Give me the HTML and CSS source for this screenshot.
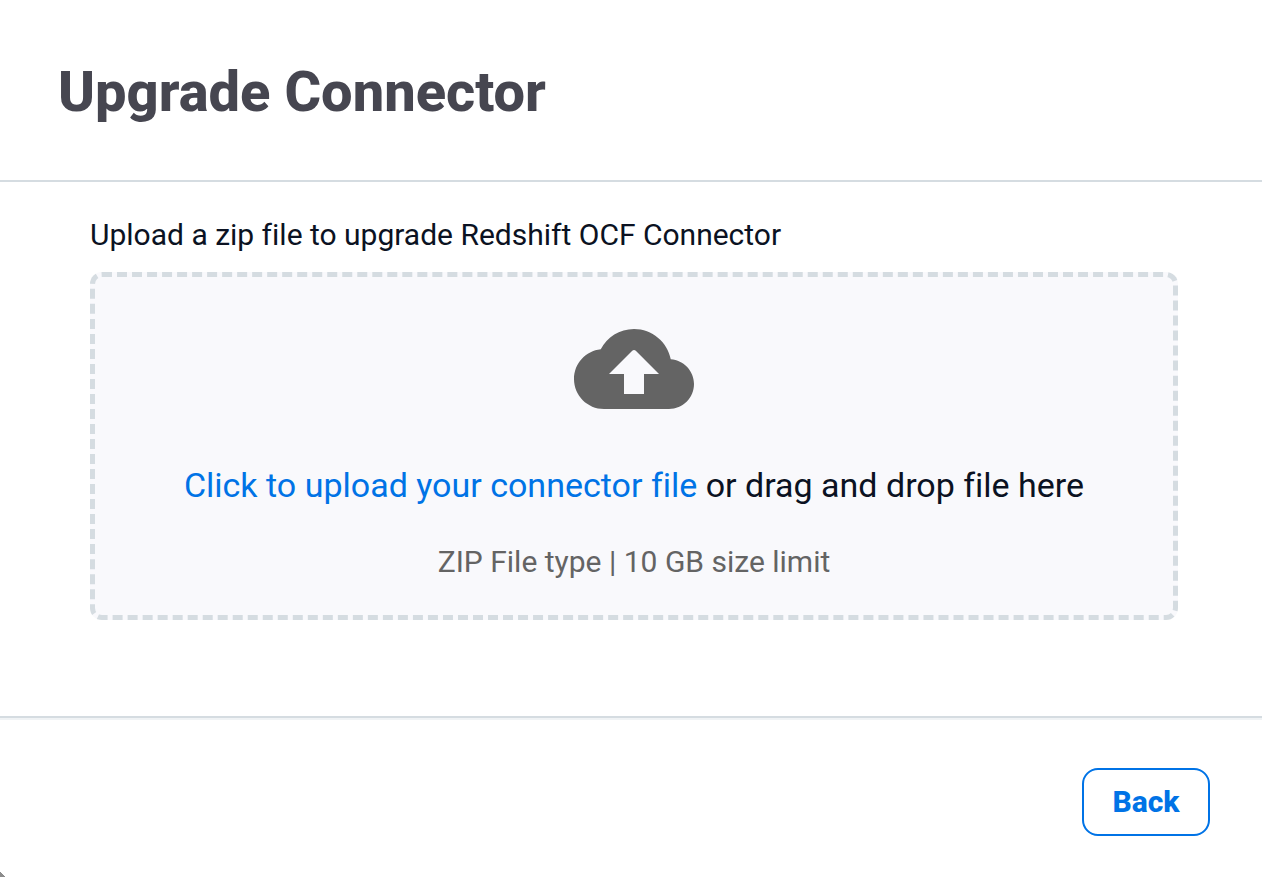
FILE: index.html
```html
<!DOCTYPE html>
<html lang="en">
  <head>
    <meta charset="UTF-8" />
    <meta name="viewport" content="width=device-width, initial-scale=1.0" />
    <title>Upgrade Connector</title>
    <link rel="stylesheet" href="styles.css">
  </head>
  <body>
    <div class="dialog">
      <header class="dialog-header">
        <h1>Upgrade Connector</h1>
      </header>

      <main class="dialog-body">
        <p class="upload-title">Upload a zip file to upgrade Redshift OCF Connector</p>
        <div class="dropzone">
          <svg class="cloud-icon" viewBox="0 4 24 16" aria-hidden="true">
            <path d="M19.35 10.04C18.67 6.59 15.64 4 12 4 9.11 4 6.6 5.64 5.35 8.04 2.34 8.36 0 10.91 0 14c0 3.31 2.69 6 6 6h13c2.76 0 5-2.24 5-5 0-2.64-2.05-4.78-4.65-4.96zM14 13v4h-4v-4H7l4.65-4.65c.2-.2.51-.2.71 0L17 13h-3z" />
          </svg>
          <p class="dropzone-text">
            <label class="upload-link" for="connector-file">Click to upload your connector file</label>
            or drag and drop file here
          </p>
          <input type="file" id="connector-file" class="file-input" accept=".zip" />
          <p class="dropzone-hint">ZIP File type | 10 GB size limit</p>
        </div>
      </main>

      <footer class="dialog-footer">
        <button type="button" class="back-button">Back</button>
      </footer>
    </div>
  </body>
</html>
```
FILE: styles.css
```css
* {
  box-sizing: border-box;
}

body {
  font-family: Roboto, "Liberation Sans", sans-serif;
  font-variant-ligatures: none;
  background: #fff;
  margin: 0;
  color: #0b1222;
}

h1,
p {
  margin: 0;
}

.dialog {
  display: flex;
  flex-direction: column;
  min-height: 100vh;
  position: relative;
}

/* page backdrop showing behind the rounded corner */
.dialog::after {
  content: "";
  position: absolute;
  left: 0;
  bottom: 0;
  width: 5px;
  height: 5px;
  background: linear-gradient(45deg, #8c8c8c 50%, transparent 50%);
}

.dialog-header {
  padding: 62px 58px 58px;
  border-bottom: 2px solid #d5dce1;
}

.dialog-header h1 {
  font-size: 56px;
  line-height: 60px;
  font-weight: 800;
  color: #464650;
}

.dialog-body {
  flex: 1;
  padding: 33px 84px 96px 90px;
}

.upload-title {
  font-size: 30px;
  line-height: 40px;
  margin-bottom: 17px;
}

.dropzone {
  display: flex;
  flex-direction: column;
  align-items: center;
  padding: 52px 20px 33px;
  text-align: center;
  background: #f9f9fc;
  border: 5px dashed #d5dce1;
  border-radius: 12px;
}

.cloud-icon {
  width: 120px;
  height: 80px;
  fill: #646464;
  margin-bottom: 56px;
}

.dropzone-text {
  font-size: 34px;
  line-height: 40px;
  margin-bottom: 37px;
}

.upload-link {
  color: #0073e6;
  cursor: pointer;
}

.file-input {
  position: absolute;
  width: 1px;
  height: 1px;
  opacity: 0;
}

.dropzone-hint {
  font-size: 30px;
  line-height: 40px;
  color: #646464;
}

.dialog-footer {
  display: flex;
  justify-content: flex-end;
  padding: 50px 52px 41px;
  border-top: 2px solid #d5dce1;
  box-shadow: inset 0 2px 0 #f0f3f5;
}

.back-button {
  font-family: inherit;
  font-size: 30px;
  line-height: 40px;
  font-weight: 800;
  width: 128px;
  padding: 12px;
  color: #0073e6;
  background: #fff;
  border: 2px solid #0073e6;
  border-radius: 16px;
  cursor: pointer;
}
```
